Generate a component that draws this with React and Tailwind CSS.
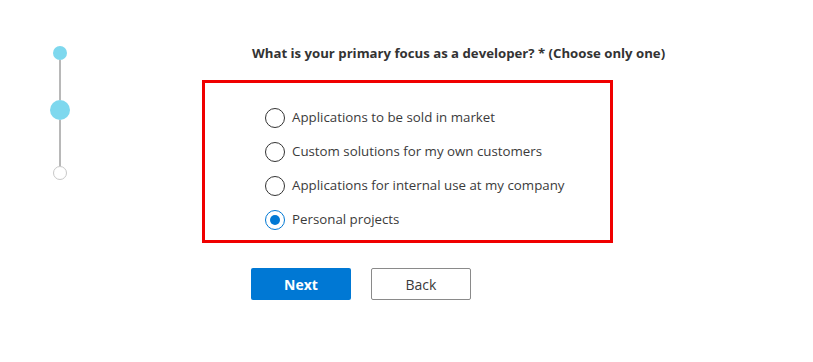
import React, { useState } from 'react';

const options = [
  'Applications to be sold in market',
  'Custom solutions for my own customers',
  'Applications for internal use at my company',
  'Personal projects',
];

// Left-hand progress rail: done, current, upcoming
const Stepper = () => (
  <div className="ml-[50px] flex w-[20px] flex-col items-center pt-[46px]">
    <div className="h-[14px] w-[14px] rounded-full bg-[#7ed8ee]"></div>
    <div className="h-[40px] w-[2px] bg-[#b8b8b8]"></div>
    <div className="h-[20px] w-[20px] rounded-full bg-[#7ed8ee]"></div>
    <div className="h-[46px] w-[2px] bg-[#b8b8b8]"></div>
    <div className="h-[14px] w-[14px] rounded-full border border-[#c8c8c8] bg-white"></div>
  </div>
);

const Radio = ({ label, checked, onSelect }) => (
  <label className="flex h-[34px] cursor-pointer items-center gap-[7px]" onClick={onSelect}>
    <span
      className={
        checked
          ? 'flex h-[20px] w-[20px] items-center justify-center rounded-full border border-[#0078d4] bg-white'
          : 'flex h-[20px] w-[20px] items-center justify-center rounded-full border border-[#333333] bg-white'
      }
    >
      {checked && <span className="h-[10px] w-[10px] rounded-full bg-[#0078d4]"></span>}
    </span>
    <span className="text-[13.3px] text-[#3b3b3b]">{label}</span>
  </label>
);

export default function App() {
  const [selected, setSelected] = useState(3);

  return (
    <div
      className="flex h-[362px] w-[813px] bg-white"
      style={{ fontFamily: '"Open Sans", "Noto Sans", sans-serif' }}
    >
      <Stepper />
      <div className="ml-[132px] flex flex-col pt-[43px]">
        <h2 className="pl-[50px] text-[13.2px] font-bold leading-[20px] text-[#333333]">
          What is your primary focus as a developer? * (Choose only one)
        </h2>
        <div className="mt-[17px] h-[163px] w-[411px] border-[3px] border-[#f00000] pl-[60px] pt-[18px]">
          {options.map((opt, i) => (
            <Radio key={opt} label={opt} checked={selected === i} onSelect={() => setSelected(i)} />
          ))}
        </div>
        <div className="ml-[49px] mt-[25px] flex gap-[20px]">
          <button className="h-[32px] w-[100px] rounded-[2px] bg-[#0078d4] text-[14px] font-bold text-white">
            Next
          </button>
          <button className="h-[32px] w-[100px] rounded-[2px] border border-[#8a8a8a] bg-white text-[14px] font-medium text-[#3b3b3b]">
            Back
          </button>
        </div>
      </div>
    </div>
  );
}
